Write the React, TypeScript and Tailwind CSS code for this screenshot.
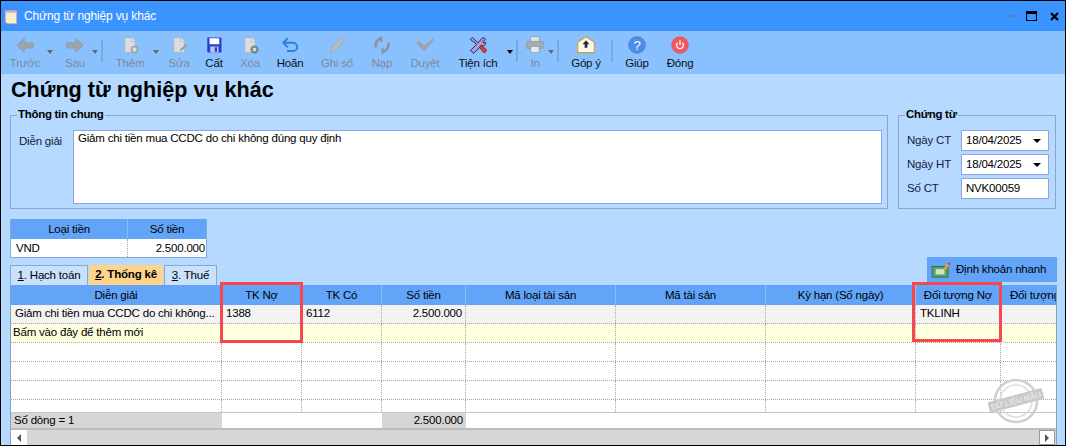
import React from "react";

const F = "[font-family:'Liberation_Sans',Arial,sans-serif]";

const Doc = ({ badge }: { badge?: React.ReactNode }) => (
  <svg width="24" height="24" viewBox="0 0 24 24">
    <path d="M5 2h9l5 5v15H5z" fill="#d9dde0" stroke="#a8b0b8" />
    <path d="M14 2v5h5" fill="#f2f2f2" stroke="#a8b0b8" />
    {badge}
  </svg>
);

const icons: Record<string, React.ReactNode> = {
  prev: (
    <svg width="24" height="24" viewBox="0 0 24 24"><path d="M1 12L11 3v6h12v7H11v6z" fill="#9aa5ad" stroke="#8f9aa3" /></svg>
  ),
  next: (
    <svg width="24" height="24" viewBox="0 0 24 24"><path d="M23 12L13 3v6H1v7h12v6z" fill="#9aa5ad" stroke="#8f9aa3" /></svg>
  ),
  add: <Doc badge={<circle cx="18" cy="18" r="4" fill="#d9dde0" stroke="#9a9fa5" strokeWidth="2" />} />,
  edit: <Doc badge={<path d="M13 21l1-4 7-6 2 2-7 6z" fill="#9a9fa5" />} />,
  save: (
    <svg width="24" height="24" viewBox="0 0 24 24">
      <rect x="3" y="2" width="19" height="20" rx="1" fill="#2a3fd0" />
      <rect x="6" y="3" width="13" height="8" fill="#ffffff" />
      <rect x="7" y="14" width="11" height="8" fill="#b9c6e8" />
      <rect x="13" y="15" width="3" height="6" fill="#2a3fd0" />
    </svg>
  ),
  del: <Doc badge={<g><circle cx="18" cy="18" r="5.5" fill="#7f858a" /><path d="M16 16l4 4m0-4l-4 4" stroke="#fff" strokeWidth="1.4" /></g>} />,
  undo: (
    <svg width="24" height="24" viewBox="0 0 24 24" fill="none">
      <path d="M4 9h12a5.5 5.5 0 0 1 0 11H8" stroke="#2d7fd8" strokeWidth="2.6" />
      <path d="M9 3L3 9l6 6" stroke="#2d7fd8" strokeWidth="2.6" />
    </svg>
  ),
  post: (
    <svg width="24" height="24" viewBox="0 0 24 24"><path d="M3 22l2-7L17 2l5 5L9 20z" fill="#b4bdc6" stroke="#98a2ab" /></svg>
  ),
  reload: (
    <svg width="24" height="24" viewBox="0 0 24 24" fill="none" stroke="#8b959d" strokeWidth="3.6">
      <path d="M4 15a9 9 0 0 1 8-12" />
      <path d="M20 9a9 9 0 0 1-8 12" />
      <path d="M12 0v8l-5-4z" fill="#8b959d" strokeWidth="1" />
      <path d="M12 24v-8l5 4z" fill="#8b959d" strokeWidth="1" />
    </svg>
  ),
  check: (
    <svg width="24" height="24" viewBox="0 0 24 24"><path d="M0 9l4-3 7 7L22 3l2 2L11 21z" fill="#9aa5ad" /></svg>
  ),
  tool: (
    <svg width="26" height="26" viewBox="0 0 26 26">
      <path d="M2 5l3-3 8 8 6-7c2-1 4 0 5 2l-4 3 1 2 3-1c1 3-2 6-6 5L7 25l-5-4 9-9z" fill="#a79ae0" stroke="#2c2450" strokeWidth="1.4" />
      <path d="M15 16l3-3 7 7c0 3-2 5-4 4z" fill="#e0393e" stroke="#5a1a1a" />
    </svg>
  ),
  print: (
    <svg width="26" height="26" viewBox="0 0 26 26">
      <rect x="7" y="1" width="12" height="8" fill="#dfe3e6" stroke="#8b959d" />
      <rect x="1" y="8" width="24" height="10" rx="1" fill="#a5adb3" stroke="#8b959d" />
      <rect x="7" y="15" width="12" height="9" fill="#e7eaec" stroke="#8b959d" />
    </svg>
  ),
  mail: (
    <svg width="26" height="26" viewBox="0 0 26 26">
      <path d="M1 9L13 1l12 8v15H1z" fill="#fff8e6" stroke="#c8a043" strokeWidth="1.6" />
      <path d="M13 6l5 6h-3v5h-4v-5H8z" fill="#1c2c44" />
    </svg>
  ),
  help: (
    <svg width="26" height="26" viewBox="0 0 26 26">
      <circle cx="13" cy="13" r="12" fill="#4d8fe8" stroke="#3a74c4" />
      <text x="13" y="20" textAnchor="middle" fontSize="19" fill="#fff" fontFamily="Liberation Sans">?</text>
    </svg>
  ),
  power: (
    <svg width="26" height="26" viewBox="0 0 26 26" fill="none">
      <circle cx="13" cy="13" r="12" fill="#f2585c" stroke="#e04a4e" />
      <path d="M9.5 9.5a5 5 0 1 0 7 0" stroke="#fff" strokeWidth="1.8" />
      <path d="M13 6v7" stroke="#fff" strokeWidth="1.8" />
    </svg>
  ),
};

const Caret = ({ dark }: { dark?: boolean }) => (
  <div className={`w-0 h-0 border-x-[3.5px] border-x-transparent border-t-[4px] ${dark ? "border-t-black" : "border-t-[#5f6b76]"}`} />
);

const Sep = ({ ml }: { ml: string }) => <div className={`w-[2px] h-[22px] bg-[#7ba9dc] mt-[9px] shrink-0 ${ml}`} />;

const Tool = ({ w, icon, label, on, caret }: { w: string; icon: string; label: string; on?: boolean; caret?: string; }) => (
  <div className={`relative flex flex-col items-center shrink-0 h-[43px] ${w}`}>
    <div className="h-[26px] pt-[1px] flex items-center justify-center [&_svg]:w-[18px] [&_svg]:h-[18px]">{icons[icon]}</div>
    <div className={`leading-[15px] whitespace-nowrap mt-[-1px] ${on ? "text-[#101010]" : "text-[#7f8a94]"}`}>{label}</div>
    {caret && (
      <div className={`absolute top-[19px] ${caret}`}>
        <Caret dark={on} />
      </div>
    )}
  </div>
);

const cols = ["w-[211px]", "w-[80px]", "w-[80px]", "w-[84px]", "w-[150px]", "w-[150px]", "w-[150px]", "w-[85px]", "w-[85px]"];
const heads = ["Diễn giải", "TK Nợ", "TK Có", "Số tiền", "Mã loại tài sản", "Mã tài sản", "Kỳ hạn (Số ngày)", "Đối tượng Nợ", "Đối tượng"];

const Row = ({ cells, cls }: { cells: string[]; cls: string }) => (
  <div className={`flex h-[19px] overflow-hidden ${cls} border-b border-dotted border-[#a8a8a8]`}>
    {cols.map((c, i) => (
      <div key={i} className={`${c} shrink-0 border-r border-dotted border-[#a8a8a8] px-[3px] pl-[4px] leading-[16px] whitespace-nowrap overflow-hidden ${i === 3 ? "text-right" : ""}`}>
        {cells[i] || ""}
      </div>
    ))}
  </div>
);

const Field = ({ label, value, caret }: { label: string; value: string; caret?: boolean }) => (
  <div className="flex items-center h-[21px] mb-[3px]">
    <div className="w-[54px] pt-[1px] text-[#1a1a3a]">{label}</div>
    <div className="w-[88px] h-[21px] bg-white border border-[#8fa3de] flex items-center justify-between pl-[4px] pr-[7px]">
      <span>{value}</span>
      {caret && <div className="w-0 h-0 border-x-[4px] border-x-transparent border-t-[4px] border-t-black" />}
    </div>
  </div>
);

const Stamp = () => (
  <svg width="56" height="48" viewBox="0 0 56 48" className="absolute left-[987px] top-[376px]">
    <circle cx="28" cy="24" r="21" fill="none" stroke="#cfcfcf" strokeWidth="2.5" />
    <circle cx="28" cy="24" r="16" fill="none" stroke="#dcdcdc" strokeWidth="1.5" />
    <g transform="rotate(-15 28 24)">
      <rect x="0" y="18" width="56" height="11" fill="#c9c9c9" />
      <text x="28" y="26.5" textAnchor="middle" fontSize="8" fontWeight="700" fill="#e4e4e4" fontFamily="Liberation Sans">DỮ LIỆU MẪU</text>
    </g>
  </svg>
);

export default function App() {
  return (
    <div className={`relative w-[1066px] h-[446px] overflow-hidden bg-[#b5d9ff] border border-black text-black text-[11.5px] tracking-[-0.2px] ${F}`}>
      {/* title bar */}
      <div className="h-[30px] bg-[#3a94ff] flex items-center pl-[3px] pr-[6px]">
        <svg width="16" height="18" viewBox="0 0 16 18" className="shrink-0">
          <path d="M1 4h12v13H3l-2-2z" fill="#f6f0c8" stroke="#8b7bc8" />
          <path d="M3 1v5M6 1v5M9 1v5M12 1v5" stroke="#7a6ab8" />
          <path d="M1 3h12v3H1z" fill="#cdbbe8" opacity=".7" />
        </svg>
        <div className="ml-[4px] text-[12px] tracking-[-0.15px] text-white">Chứng từ nghiệp vụ khác</div>
        <div className="flex-1" />
        <div className="w-[7px] h-[2px] bg-[#5f7fa8] mr-[11px]" />
        <div className="w-[11px] h-[10px] border border-black border-t-[3px] mr-[13px]" />
        <svg width="9" height="9" viewBox="0 0 9 9"><path d="M1 1l7 7m0-7L1 8" stroke="#000" strokeWidth="2.2" /></svg>
      </div>
      {/* toolbar */}
      <div className="h-[43px] bg-[#89c1ff] flex pl-[4px]">
        <Tool w="w-[40px]" icon="prev" label="Trước" caret="right-[-8px]" />
        <Tool w="w-[40px] ml-[10px]" icon="next" label="Sau" caret="right-[-3px]" />
        <Sep ml="ml-[6px]" />
        <Tool w="w-[40px] ml-[7px]" icon="add" label="Thêm" caret="right-[-9px]" />
        <Tool w="w-[30px] ml-[14px]" icon="edit" label="Sửa" />
        <Tool w="w-[30px] ml-[5px]" icon="save" label="Cất" on />
        <Tool w="w-[30px] ml-[6px]" icon="del" label="Xóa" />
        <Tool w="w-[40px] ml-[5px]" icon="undo" label="Hoãn" on />
        <Tool w="w-[40px] ml-[7px]" icon="post" label="Ghi sổ" />
        <Tool w="w-[30px] ml-[10px]" icon="reload" label="Nạp" />
        <Tool w="w-[40px] ml-[8px]" icon="check" label="Duyệt" />
        <Tool w="w-[50px] ml-[8px]" icon="tool" label="Tiện ích" on caret="right-[-10px]" />
        <Sep ml="ml-[13px]" />
        <Tool w="w-[20px] ml-[7px]" icon="print" label="In" caret="right-[-9px]" />
        <Sep ml="ml-[12px]" />
        <Tool w="w-[40px] ml-[7px]" icon="mail" label="Góp ý" on />
        <Sep ml="ml-[5px]" />
        <Tool w="w-[30px] ml-[9px]" icon="help" label="Giúp" on />
        <Tool w="w-[40px] ml-[8px]" icon="power" label="Đóng" on />
      </div>

      <div className="pl-[9px] pr-[8px]">
        <div className="h-[30px] pt-[2px] pl-[1px] text-[21.6px] tracking-normal leading-[28px] font-bold">Chứng từ nghiệp vụ khác</div>

        {/* groups */}
        <div className="flex gap-[10px] mt-[11px] h-[94px]">
          <div className="relative w-[878px] border border-[#8ea5c6]">
            <div className="absolute left-[6px] top-[-9px] bg-[#b5d9ff] px-[1px] leading-[14px] font-bold tracking-[-0.3px]">Thông tin chung</div>
            <div className="flex pt-[14px] pl-[8px]">
              <div className="w-[54px] pt-[3px] text-[#1a1a3a]">Diễn giải</div>
              <div className="w-[809px] h-[74px] bg-white border border-[#8fa3de] px-[4px] leading-[15px]">Giảm chi tiền mua CCDC do chi không đúng quy định</div>
            </div>
          </div>
          <div className="relative w-[158px] border border-[#8ea5c6]">
            <div className="absolute left-[6px] top-[-9px] bg-[#b5d9ff] px-[1px] leading-[14px] font-bold tracking-[-0.3px]">Chứng từ</div>
            <div className="pt-[14px] pl-[8px]">
              <Field label="Ngày CT" value="18/04/2025" caret />
              <Field label="Ngày HT" value="18/04/2025" caret />
              <Field label="Số CT" value="NVK00059" />
            </div>
          </div>
        </div>

        {/* currency table */}
        <div className="mt-[10px] w-[197px] border-x border-[#86a9d6] border-b">
          <div className="flex h-[20px] bg-[#62a5f8] leading-[20px] text-center">
            <div className="w-[117px] border-r border-[#8dbcf5]">Loại tiền</div>
            <div className="flex-1">Số tiền</div>
          </div>
          <div className="flex h-[18px] bg-white leading-[18px]">
            <div className="w-[117px] pl-[5px] border-r border-dotted border-[#a8a8a8]">VND</div>
            <div className="flex-1 text-right pr-[1px]">2.500.000</div>
          </div>
        </div>

        {/* tabs + button */}
        <div className="flex items-end h-[27px]">
          <div className="flex leading-[19px]">
            <div className="w-[78px] h-[20px] bg-[#c9e2fb] border-x border-t border-[#86a9d6] text-center"><u>1</u>. Hạch toán</div>
            <div className="ml-[1px] w-[74px] h-[20px] bg-[#ffd38a] text-center font-bold"><u>2</u>. Thống kê</div>
            <div className="ml-[1px] w-[53px] h-[20px] bg-[#c9e2fb] border-x border-t border-[#86a9d6] text-center"><u>3</u>. Thuế</div>
          </div>
          <div className="ml-auto mb-[3px] w-[130px] h-[25px] bg-[#62a5f8] flex items-center whitespace-nowrap">
            <svg width="20" height="16" viewBox="0 0 22 18" className="ml-[4px] mr-[5px] shrink-0">
              <rect x="1" y="5" width="18" height="12" fill="#5aa06a" stroke="#2f6a42" />
              <rect x="5" y="8" width="10" height="6" fill="#cfe6c9" />
              <path d="M13 8l6-7 2 2-6 7z" fill="#e8a040" />
              <path d="M19 1l2 2" stroke="#d0403c" strokeWidth="2" />
            </svg>
            Định khoản nhanh
          </div>
        </div>

        {/* grid */}
        <div className="w-[1047px] border-x border-[#86a0c0] bg-white overflow-hidden">
          <div className="flex h-[20px] bg-[#62a5f8] overflow-hidden">
            {cols.map((c, i) => (
              <div key={i} className={`${c} shrink-0 border-r border-[#8dbcf5] leading-[20px] whitespace-nowrap overflow-hidden ${i === 8 ? "text-left pl-[9px] border-r-0" : "text-center"}`}>{heads[i]}</div>
            ))}
          </div>
          <Row cls="bg-[#f3f3f3]" cells={["Giảm chi tiền mua CCDC do chi không...", "1388", "6112", "2.500.000", "", "", "", "TKLINH"]} />
          <Row cls="bg-[#ffffe1] [&>div:first-child]:pl-[2px]" cells={["Bấm vào đây để thêm mới"]} />
          <Row cls="bg-white" cells={[]} />
          <Row cls="bg-white" cells={[]} />
          <Row cls="bg-white" cells={[]} />
          <div className="flex h-[12px] bg-white overflow-hidden">
            {cols.map((c, i) => (
              <div key={i} className={`${c} shrink-0 border-r border-dotted border-[#a8a8a8]`} />
            ))}
          </div>
          <div className="flex h-[16px] border-t border-[#b8cbdc] leading-[15px]">
            <div className="w-[211px] bg-[#d6d6d6] pl-[3px]">Số dòng = 1</div>
            <div className="w-[160px] bg-white" />
            <div className="w-[84px] bg-[#d6d6d6] text-right pr-[3px]">2.500.000</div>
            <div className="flex-1 bg-white" />
          </div>
          <div className="flex h-[17px] bg-[#d6d6d6] border-t-[2px] border-[#bcbcbc] justify-between pr-[1px]">
            <div className="w-[16px] h-[15px] bg-white flex items-center justify-center">
              <div className="w-0 h-0 border-y-[4px] border-y-transparent border-r-[4px] border-r-[#555]" />
            </div>
            <div className="w-[16px] h-[15px] bg-white border border-[#999] flex items-center justify-center">
              <div className="w-0 h-0 border-y-[4px] border-y-transparent border-l-[4px] border-l-[#555]" />
            </div>
          </div>
        </div>
      </div>

      <Stamp />
      {/* red highlight frames */}
      <div className="absolute left-[219px] top-[281px] w-[83px] h-[61px] border-[3px] border-[#f7474c]" />
      <div className="absolute left-[911px] top-[281px] w-[90px] h-[60px] border-[3px] border-[#f7474c]" />
    </div>
  );
}
